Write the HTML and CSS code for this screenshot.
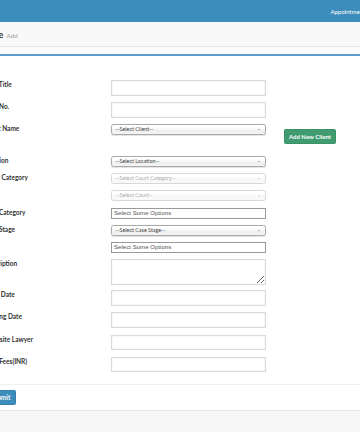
FILE: index.html
```html
<html>

<head>
  <meta charset="UTF-8">
  <title>Case Add</title>
  <link rel="stylesheet" href="styles.css">
</head>

<body>
  <header class="topbar">
    <nav class="topnav">
      <a href="#">Appointments</a>
      <a href="#">Cases</a>
    </nav>
  </header>

  <div class="wrapper">
    <section class="content-header">
      <h1>Case <small>Add</small></h1>
    </section>

    <section class="content">
      <div class="box">
        <form class="case-form">
          <div class="box-body">
            <div class="form-group">
              <label>Case Title</label>
              <div class="field"><input class="form-control" type="text"></div>
            </div>
            <div class="form-group">
              <label>Case No.</label>
              <div class="field"><input class="form-control" type="text"></div>
            </div>
            <div class="form-group client-row">
              <label>Client Name</label>
              <div class="field">
                <div class="chosen-single"><span>--Select Client--</span><b></b></div>
              </div>
              <div class="side"><button type="button" class="btn btn-success">Add New Client</button></div>
            </div>
            <div class="form-group">
              <label>Location</label>
              <div class="field">
                <div class="chosen-single"><span>--Select Location--</span><b></b></div>
              </div>
            </div>
            <div class="form-group">
              <label>Court Category</label>
              <div class="field">
                <div class="chosen-single disabled"><span>--Select Court Category--</span><b></b></div>
              </div>
            </div>
            <div class="form-group court-row">
              <label class="link">Court</label>
              <div class="field">
                <div class="chosen-single disabled"><span>--Select Court--</span><b></b></div>
              </div>
            </div>
            <div class="form-group">
              <label>Case Category</label>
              <div class="field">
                <div class="chosen-choices">Select Some Options</div>
              </div>
            </div>
            <div class="form-group">
              <label>Case Stage</label>
              <div class="field">
                <div class="chosen-single"><span>--Select Case Stage--</span><b></b></div>
              </div>
            </div>
            <div class="form-group">
              <label></label>
              <div class="field">
                <div class="chosen-choices">Select Some Options</div>
              </div>
            </div>
            <div class="form-group desc-row">
              <label>Description</label>
              <div class="field"><textarea class="form-control"></textarea></div>
            </div>
            <div class="form-group date-row">
              <label>Filing Date</label>
              <div class="field"><input class="form-control" type="text"></div>
            </div>
            <div class="form-group date-row">
              <label>Hearing Date</label>
              <div class="field"><input class="form-control" type="text"></div>
            </div>
            <div class="form-group date-row">
              <label>Opposite Lawyer</label>
              <div class="field"><input class="form-control" type="text"></div>
            </div>
            <div class="form-group date-row">
              <label>Total Fees(INR)</label>
              <div class="field"><input class="form-control" type="text"></div>
            </div>
          </div>

          <div class="box-footer">
            <button type="button" class="btn btn-primary">Submit</button>
          </div>
        </form>
      </div>
    </section>
  </div>
</body>

</html>
```

FILE: styles.css
```css
body {
  margin: 0;
  overflow: hidden;
  background-color: #f7f7f7;
  font-family: Lato, "Open Sans", sans-serif;
  color: #333;
}

/* top blue bar */
.topbar {
  height: 22px;
  background-color: #3c8dbc;
  display: flex;
  align-items: center;
}

.topnav {
  margin-left: auto;
  margin-right: -33px;
  display: flex;
  gap: 10px;
}

.topnav a {
  color: #fff;
  font-size: 6px;
  text-decoration: none;
}

/* page is shifted left, like the original screenshot */
.wrapper {
  margin-left: -30px;
  width: 420px;
}

.content-header {
  height: 24px;
  padding-left: 14px;
  border-bottom: 1px solid #e6e6e6;
  background-color: #f9f9f9;
  display: flex;
  align-items: center;
}

.content-header h1 {
  margin: 0;
  font-size: 9px;
  font-weight: 700;
  color: #333;
}

.content-header small {
  font-size: 6.3px;
  font-weight: 400;
  color: #999;
  margin-left: 1px;
}

.content {
  padding-top: 7px;
  background-color: #fcfcfc;
}

.box {
  background-color: #fff;
  border-top: 2px solid #5a9dc9;
  border-bottom: 1px solid #e6e6e6;
}

.case-form {
  margin: 0;
}

.box-body {
  padding: 24px 0 5px 0;
}

.form-group {
  display: flex;
  align-items: flex-start;
  padding-left: 13.5px;
  margin-bottom: 6.5px;
}

.form-group label {
  flex: none;
  width: 127.5px;
  font-size: 6.5px;
  font-weight: 700;
  line-height: 9px;
  color: #333;
}

.form-group label.link {
  color: #3c8dbc;
}

.client-row {
  margin-bottom: 12px;
}

.court-row {
  margin-bottom: 7.5px;
}

.desc-row {
  margin-bottom: 5.5px;
}

.date-row {
  margin-bottom: 6.8px;
}

.field {
  width: 155px;
  flex: none;
}

.side {
  margin-left: 18px;
  margin-top: 5px;
}

.form-control {
  display: block;
  box-sizing: border-box;
  width: 100%;
  height: 15.5px;
  margin: 0;
  padding: 0 3px;
  border: 1px solid #dadada;
  border-radius: 0;
  box-shadow: inset 0 0 0 0.5px #f2f2f2;
  background-color: #fff;
  font-size: 6px;
}

textarea.form-control {
  height: 25.5px;
  resize: vertical;
}

/* chosen-like selects */
.chosen-single {
  box-sizing: border-box;
  height: 10.5px;
  display: flex;
  align-items: center;
  padding-left: 3.5px;
  border: 1px solid #aaa;
  border-radius: 2.5px;
  background: linear-gradient(#fff 20%, #f6f6f6 50%, #eee 52%, #f4f4f4 100%);
  box-shadow: 0 0.5px 1px rgba(0, 0, 0, .12);
  font-size: 5.4px;
  color: #444;
  white-space: nowrap;
}

.chosen-single b {
  margin-left: auto;
  margin-right: 5px;
  border-left: 1.3px solid transparent;
  border-right: 1.3px solid transparent;
  border-top: 1.8px solid #777;
}

.chosen-single.disabled {
  opacity: .45;
  box-shadow: none;
}

.chosen-choices {
  box-sizing: border-box;
  height: 10.5px;
  padding-left: 2px;
  border: 1px solid #999;
  background-color: #fff;
  font-family: "Liberation Sans", Arial, sans-serif;
  font-size: 6.1px;
  line-height: 8.5px;
  color: #555;
  white-space: nowrap;
}

.btn {
  height: 15px;
  border: 1px solid transparent;
  border-radius: 1.5px;
  font-family: Lato, sans-serif;
  font-size: 6px;
  font-weight: 700;
  color: #fff;
  cursor: pointer;
}

.btn-success {
  width: 52px;
  padding: 0;
  background-color: #409b70;
  border-color: #3a9267;
}

.btn-primary {
  padding: 0 5px;
  margin-left: 14px;
  font-size: 6.5px;
  background-color: #3c8dbc;
  border-color: #367fa9;
}

.box-footer {
  display: flex;
  border-top: 1px solid #f0f0f0;
  padding: 4.5px 0 5px 0;
}
```
